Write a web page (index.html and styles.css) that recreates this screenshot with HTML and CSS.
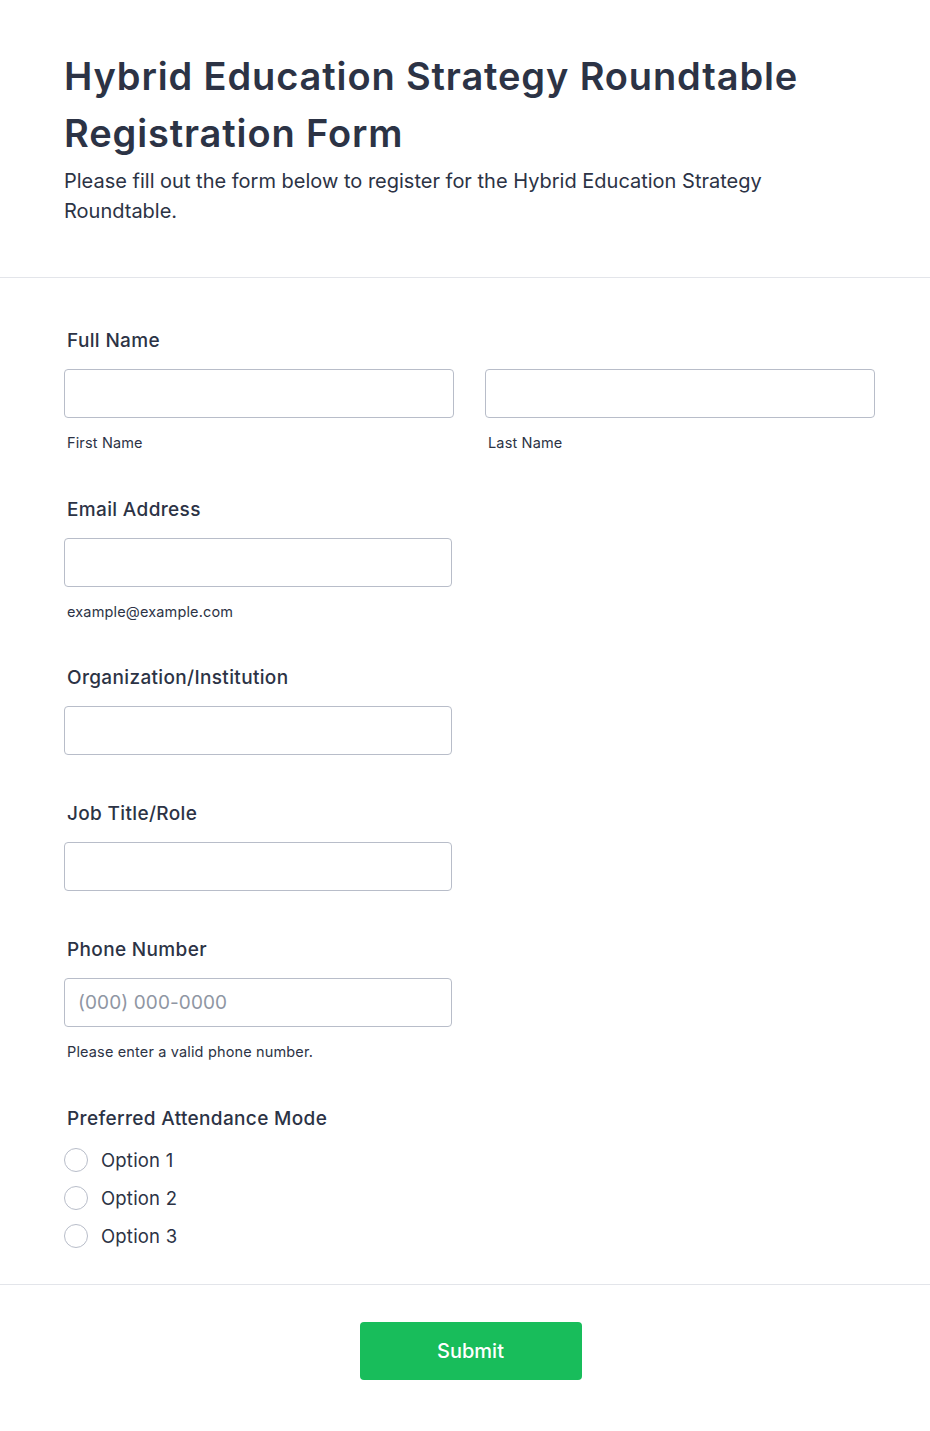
FILE: index.html
```html
<!DOCTYPE html>
<html lang="en">
<head>
<meta charset="utf-8">
<title>Hybrid Education Strategy Roundtable Registration Form</title>
<link rel="stylesheet" href="styles.css">
</head>
<body>
<main class="form">
  <header class="form-header">
    <h1 class="form-title">Hybrid Education Strategy Roundtable Registration Form</h1>
    <p class="form-subtitle">Please fill out the form below to register for the Hybrid Education Strategy Roundtable.</p>
  </header>

  <section class="form-body">
    <div class="field has-sub">
      <label class="field-label">Full Name</label>
      <div class="name-row">
        <div class="name-col">
          <input class="text-input" type="text">
          <span class="sublabel">First Name</span>
        </div>
        <div class="name-col">
          <input class="text-input" type="text">
          <span class="sublabel">Last Name</span>
        </div>
      </div>
    </div>

    <div class="field has-sub">
      <label class="field-label">Email Address</label>
      <input class="text-input narrow" type="email">
      <span class="sublabel">example@example.com</span>
    </div>

    <div class="field">
      <label class="field-label">Organization/Institution</label>
      <input class="text-input narrow" type="text">
    </div>

    <div class="field">
      <label class="field-label">Job Title/Role</label>
      <input class="text-input narrow" type="text">
    </div>

    <div class="field has-sub">
      <label class="field-label">Phone Number</label>
      <input class="text-input narrow" type="tel" placeholder="(000) 000-0000">
      <span class="sublabel">Please enter a valid phone number.</span>
    </div>

    <div class="field last">
      <label class="field-label">Preferred Attendance Mode</label>
      <div class="options">
        <label class="option"><span class="radio"></span><span>Option 1</span></label>
        <label class="option"><span class="radio"></span><span>Option 2</span></label>
        <label class="option"><span class="radio"></span><span>Option 3</span></label>
      </div>
    </div>
  </section>

  <footer class="form-footer">
    <button class="submit" type="button">Submit</button>
  </footer>
</main>
</body>
</html>
```

FILE: styles.css
```css
* { box-sizing: border-box; }

html, body {
  margin: 0;
  padding: 0;
  background: #ffffff;
}

body {
  font-family: Inter, "Noto Sans", "Liberation Sans", sans-serif;
  color: #2c3345;
}

.form {
  width: 930px;
}

.form-header {
  padding: 48px 64px 51px;
  border-bottom: 1px solid #e3e5ea;
}

.form-title {
  margin: 0;
  font-size: 38px;
  line-height: 57px;
  font-weight: 600;
  letter-spacing: 0.87px;
  color: #2c3345;
}

.form-subtitle {
  margin: 4px 0 0;
  font-size: 20px;
  line-height: 30px;
  font-weight: 400;
  color: #2c3345;
  max-width: 720px;
}

.form-body {
  padding: 49px 55px 0 64px;
  border-bottom: 1px solid #e3e5ea;
}

.field {
  display: flex;
  flex-direction: column;
  padding-bottom: 45px;
}

.field.has-sub {
  padding-bottom: 42.5px;
}

.field.last {
  padding-bottom: 33px;
}

.field-label {
  font-size: 19px;
  line-height: 28px;
  font-weight: 500;
  letter-spacing: 0.35px;
  margin: 0 0 14px 3px;
}

.name-row {
  display: flex;
  gap: 31px;
}

.name-col {
  display: flex;
  flex-direction: column;
  width: 390px;
}

.text-input {
  display: block;
  width: 100%;
  height: 49px;
  border: 1px solid #b8bdc9;
  border-radius: 4px;
  padding: 0 13px;
  font-family: inherit;
  font-size: 19px;
  letter-spacing: 0.1px;
  color: #2c3345;
  background: #fff;
  outline: none;
}

.text-input.narrow {
  width: 388px;
}

.text-input::placeholder {
  color: #8f96a3;
}

.sublabel {
  margin: 15px 0 0 3px;
  font-size: 14.5px;
  line-height: 20px;
  letter-spacing: 0.15px;
  color: #2c3345;
}

.options {
  display: flex;
  flex-direction: column;
  gap: 8px;
  margin-top: -2px;
}

.option {
  display: flex;
  align-items: center;
  gap: 13px;
  height: 30px;
  font-size: 18.5px;
  letter-spacing: 0.2px;
  color: #2c3345;
}

.radio {
  width: 24px;
  height: 24px;
  border: 1px solid #b8bdc9;
  border-radius: 50%;
  background: #fff;
  flex: none;
}

.form-footer {
  display: flex;
  justify-content: center;
  padding: 37px 0 51px 11px;
}

.submit {
  width: 222px;
  height: 58px;
  border: none;
  border-radius: 4px;
  background: #18bd5b;
  color: #ffffff;
  font-family: inherit;
  font-size: 20px;
  font-weight: 500;
  cursor: pointer;
}
```
